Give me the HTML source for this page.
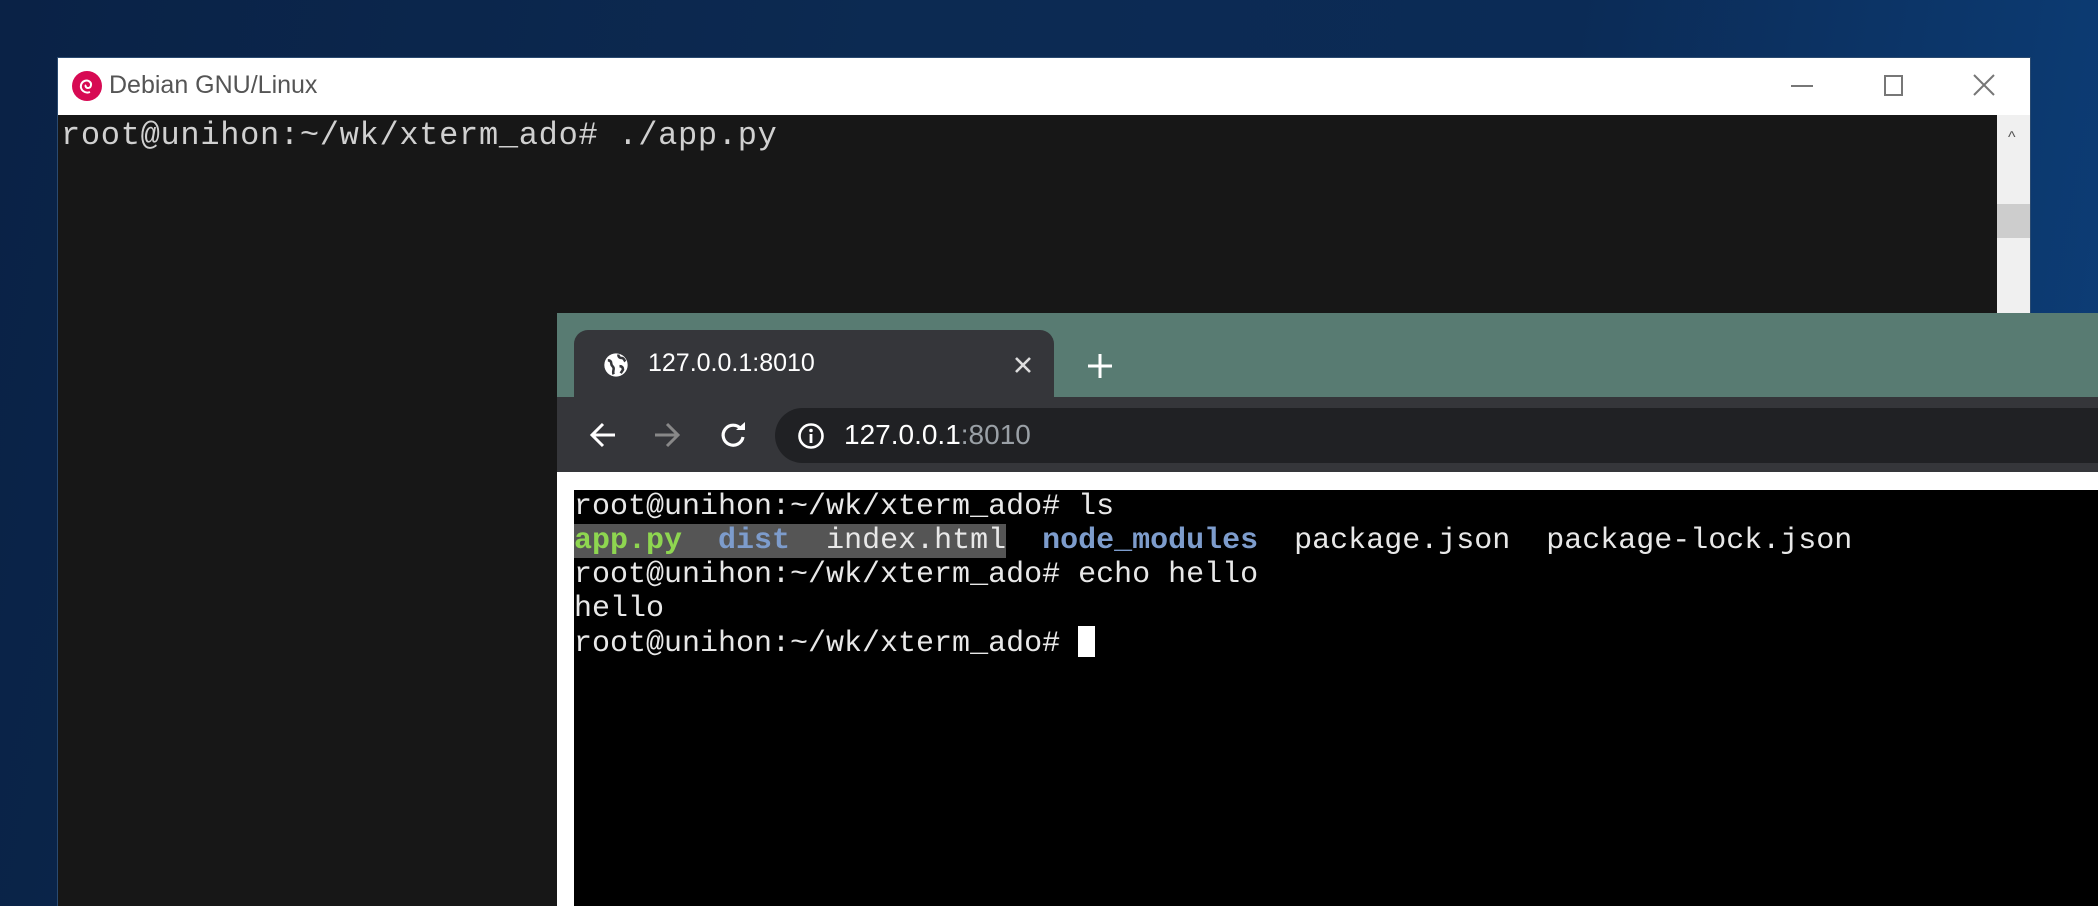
<!DOCTYPE html>
<html style="overflow:hidden;height:906px"><head><meta charset="utf-8"><style>
*{margin:0;padding:0;box-sizing:border-box}
html,body{overflow:hidden}
body{width:2098px;height:906px;position:relative;background:linear-gradient(100deg,#0a2246 0%,#0c2a52 40%,#0b2b56 70%,#0d3f7a 100%);font-family:"Liberation Sans",sans-serif}
.abs{position:absolute}
#dw{left:57px;top:57px;width:1974px;height:849px;background:#171717;border:1px solid #2a4a70;border-bottom:none;overflow:hidden}
#tb{left:0;top:0;width:100%;height:57px;background:#fff}
#sb{right:0;top:57px;width:33px;height:780px;background:#f0f0f0}
#br{left:557px;top:313px;width:1541px;height:593px;background:#fff;overflow:hidden}
#tabs{left:0;top:0;width:100%;height:84px;background:#587b72}
#tab{left:17px;top:17px;width:480px;height:67px;background:#35363a;border-radius:14px 14px 0 0}
#tool{left:0;top:84px;width:100%;height:75px;background:#35363a}
#omni{left:218px;top:11px;width:1400px;height:55px;background:#202124;border-radius:28px 0 0 28px}
#term{left:17px;top:177px;width:1524px;height:416px;background:#000;font-family:"Liberation Mono",monospace;font-size:30px;color:#e8e8e8;line-height:34px;white-space:pre;overflow:hidden}
.g{color:#8ed650;font-weight:bold}.b{color:#7d9ccc;font-weight:bold}
.sel{background:#555}
</style></head><body>
<div id="dw" class="abs">
 <div id="tb" class="abs">
  <svg class="abs" style="left:13px;top:12px" width="32" height="32" viewBox="0 0 32 32"><circle cx="16" cy="16" r="15" fill="#d70a53"/><path d="M19 22c-5 2-10-2-9-7 1-4 6-6 9-3 2 2 1 6-2 6-2 0-3-2-2-3" stroke="#fff" stroke-width="2" fill="none"/></svg>
  <div class="abs" style="left:51px;top:13px;font-size:25px;color:#555">Debian GNU/Linux</div>
  <div class="abs" style="left:1733px;top:27px;width:22px;height:2px;background:#777"></div>
  <div class="abs" style="left:1826px;top:17px;width:19px;height:21px;border:2px solid #777"></div>
  <svg class="abs" style="left:1915px;top:16px" width="22" height="22"><path d="M1 1L21 21M21 1L1 21" stroke="#777" stroke-width="2"/></svg>
 </div>
 <div id="sb" class="abs"><div class="abs" style="left:0;top:89px;width:33px;height:34px;background:#cdcdcd"></div><div class="abs" style="left:11px;top:14px;font-size:16px;color:#555">^</div></div>
 <div class="abs" style="left:3px;top:59px;font-family:'Liberation Mono',monospace;font-size:32px;letter-spacing:0.7px;color:#d0d0d0;white-space:pre">root@unihon:~/wk/xterm_ado# ./app.py</div>
</div>
<div id="br" class="abs">
 <div id="tabs" class="abs">
  <div id="tab" class="abs">
   <svg class="abs" style="left:28px;top:21px" width="28" height="28" viewBox="0 0 24 24"><circle cx="12" cy="12" r="10" fill="#fff"/><path d="M5 8c2 0 3 1 3 3s2 2 2 4-1 3 0 5M14 3c0 2 1 3 3 3s2 2 3 3M15 13c2 0 3 1 3 3l-2 3" stroke="#35363a" stroke-width="2.2" fill="none"/></svg>
   <div class="abs" style="left:74px;top:19px;font-size:25px;color:#fff">127.0.0.1:8010</div>
   <svg class="abs" style="left:440px;top:26px" width="18" height="18"><path d="M2 2L16 16M16 2L2 16" stroke="#ddd" stroke-width="2.6"/></svg>
  </div>
  <svg class="abs" style="left:530px;top:40px" width="26" height="26"><path d="M13 1V25M1 13H25" stroke="#fff" stroke-width="3"/></svg>
 </div>
 <div id="tool" class="abs">
  <svg class="abs" style="left:32px;top:24px" width="28" height="28"><path d="M26 14H4M14 3L3 14L14 25" stroke="#fff" stroke-width="3" fill="none"/></svg>
  <svg class="abs" style="left:96px;top:24px" width="28" height="28"><path d="M2 14H24M14 3L25 14L14 25" stroke="#888" stroke-width="3" fill="none"/></svg>
  <svg class="abs" style="left:161px;top:23px" width="30" height="30"><path d="M23 9A10 10 0 1 0 25 17" stroke="#fff" stroke-width="3.2" fill="none"/><path d="M18 10H27V2Z" fill="#fff"/></svg>
  <div id="omni" class="abs">
   <svg class="abs" style="left:22px;top:14px" width="28" height="28"><circle cx="14" cy="14" r="11.5" stroke="#fff" stroke-width="2.6" fill="none"/><rect x="12.6" y="12" width="2.8" height="9" fill="#fff"/><circle cx="14" cy="8.5" r="1.8" fill="#fff"/></svg>
   <div class="abs" style="left:69px;top:11px;font-size:28px;color:#fff">127.0.0.1<span style="color:#9aa0a6">:8010</span></div>
  </div>
 </div>
 <div id="term" class="abs">root@unihon:~/wk/xterm_ado# ls
<span class="sel"><span class="g">app.py</span>  <span class="b">dist</span>  index.html</span>  <span class="b">node_modules</span>  package.json  package-lock.json
root@unihon:~/wk/xterm_ado# echo hello
hello
root@unihon:~/wk/xterm_ado# <span style="display:inline-block;width:17px;height:31px;background:#fff;vertical-align:-6px"></span></div>
</div>
</body></html>
